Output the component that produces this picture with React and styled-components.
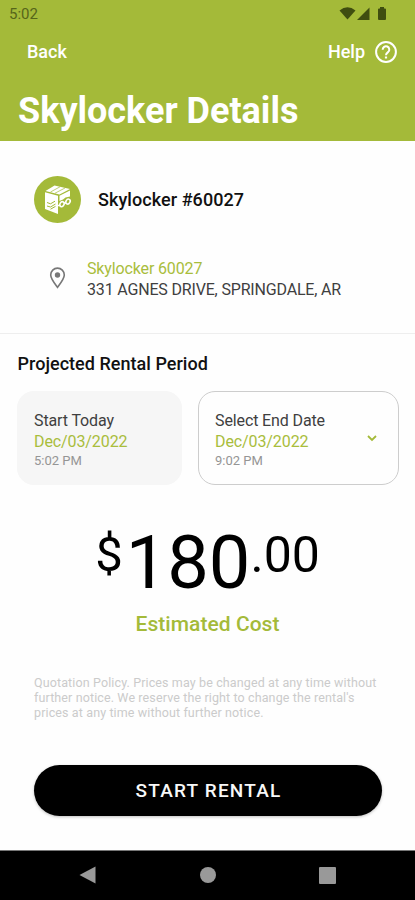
import React from "react";
import styled, { createGlobalStyle } from "styled-components";

const GlobalStyle = createGlobalStyle`
  :root {
    --color-primary: #a4ba39;
    --color-link: #a9bd3c;
    --color-text: #3f3f3f;
    --color-muted: #959595;
  }
  * {
    box-sizing: border-box;
  }
  body {
    margin: 0;
    background-color: #fefefe;
    font-family: Roboto, "Liberation Sans", sans-serif;
  }
  h1,
  h2,
  p {
    margin: 0;
  }
`;

const Screen = styled.div`
  width: 415px;
  height: 900px;
  overflow: hidden;
  display: flex;
  flex-direction: column;
  background-color: #fefefe;
`;

const Header = styled.header`
  flex: none;
  height: 141px;
  background-color: var(--color-primary);
  color: #fff;
`;

const StatusBar = styled.div`
  height: 28px;
  padding: 0 28px 0 9px;
  display: flex;
  align-items: center;
  justify-content: space-between;
  font-size: 15px;
  color: #56651a;
  & svg {
    display: block;
  }
`;

const NavRow = styled.div`
  height: 47px;
  padding: 0 18px 0 27px;
  display: flex;
  align-items: center;
  justify-content: space-between;
`;

const HeaderButton = styled.button`
  display: flex;
  align-items: center;
  gap: 10px;
  padding: 0;
  border: 0;
  background: none;
  color: inherit;
  font: 500 18px/24px Roboto, sans-serif;
`;

const Title = styled.h1`
  padding-left: 18px;
  font-size: 36px;
  line-height: 73px;
  font-weight: 700;
`;

const LockerSection = styled.section`
  flex: none;
  height: 193px;
  padding: 35px 34px 0;
  border-bottom: 1px solid #eee;
`;

const LockerRow = styled.div`
  display: flex;
  align-items: center;
  gap: 17px;
  height: 47px;
`;

const LockerName = styled.h2`
  font-size: 18px;
  line-height: 24px;
  font-weight: 500;
  letter-spacing: 0.07px;
  color: #111;
`;

const AddressRow = styled.div`
  display: flex;
  align-items: center;
  gap: 21px;
  margin-top: 35px;
  padding-left: 15px;
  & > svg {
    margin-top: -2px;
  }
`;

const Line = styled.p`
  font-size: ${({ $size }) => $size || 16}px;
  line-height: ${({ $height }) => $height || 21}px;
  letter-spacing: ${({ $spacing }) => $spacing || 0}px;
  color: ${({ $color }) => $color || "var(--color-text)"};
  white-space: nowrap;
`;

const PeriodTitle = styled.h2`
  padding: 18px 0 0 17.5px;
  font-size: 18px;
  line-height: 24px;
  font-weight: 500;
  letter-spacing: 0.03px;
  color: #111;
`;

const PeriodRow = styled.div`
  display: grid;
  grid-template-columns: 165px 201px;
  gap: 16px;
  margin: 15px 0 0 17px;
`;

const PeriodCard = styled.div`
  height: 94px;
  padding: 2px 21px 0 16px;
  display: flex;
  align-items: center;
  justify-content: space-between;
  border-radius: 17px;
  border: 1px solid ${({ $outlined }) => ($outlined ? "#cdcdcd" : "#f6f6f6")};
  background-color: ${({ $outlined }) => ($outlined ? "#fefefe" : "#f6f6f6")};
  & > svg {
    margin-top: -2px;
  }
`;

const Price = styled.div`
  display: flex;
  justify-content: center;
  margin-top: 35px;
  height: 85px;
  color: #000;
`;

const PricePart = styled.span`
  font-size: ${({ $size }) => $size}px;
  line-height: ${({ $height }) => $height}px;
  margin-right: ${({ $gap }) => $gap || 0}px;
`;

const CostLabel = styled.p`
  margin-top: 6px;
  text-align: center;
  font-size: 21px;
  line-height: 26px;
  font-weight: 500;
  letter-spacing: 0.05px;
  color: var(--color-primary);
`;

const Policy = styled.div`
  margin: 38px 0 0 34px;
`;

const StartButton = styled.button`
  flex: none;
  width: 348px;
  height: 51px;
  margin: 45px 0 0 34px;
  padding: 1px 0 0 1px;
  border: 0;
  border-radius: 26px;
  background-color: #000;
  color: #f8f8f8;
  font: 500 19px/50px Roboto, sans-serif;
  letter-spacing: 1.2px;
  box-shadow: 0 1px 3px rgba(0, 0, 0, 0.25);
`;

const SystemNav = styled.nav`
  flex: none;
  height: 50px;
  margin-top: auto;
  padding: 0 79px 1px 79px;
  display: flex;
  align-items: center;
  justify-content: space-between;
  border-top: 1px solid #777;
  background-color: #000;
`;

const StatusIcons = () => (
  <svg width="49" height="14" viewBox="0 0 49 14" fill="#3f4d10">
    <path d="M1.500 3.500Q9.500-2.800 17.500 3.500L9.500 12.500Z" />
    <path d="M31.500 .5V13H19Z" />
    <path d="M42 0h4v1.500h1q1 0 1 1V12q0 1-1 1h-6q-1 0-1-1V2.500q0-1 1-1H42Z" />
  </svg>
);

const HelpIcon = () => (
  <svg width="22" height="22" viewBox="0 0 22 22" fill="none" stroke="#fff">
    <circle cx="11" cy="11" r="9.900" strokeWidth="2" />
    <path
      d="M7.700 8.800a3.300 3.300 0 1 1 5.400 2.300C12 12 11 12.600 11 14.200"
      strokeWidth="2"
    />
    <path d="M11 15.500v2" strokeWidth="2.200" />
  </svg>
);

const LockerLogo = () => (
  <svg width="47" height="47" viewBox="0 0 47 47">
    <circle cx="23.500" cy="23.500" r="23.500" fill="#a4ba39" />
    <path d="M11.500 15 20.500 9.500 36 13 25.500 18.500Z" fill="#fff" />
    <path d="M11 16.200 24 19.700V38L11 33Z" fill="#fff" />
    <path d="M25.500 19.800 36 14.500V20.500L31.500 21.500 29 23.500 25.500 25Z" fill="#fff" />
    <g fill="none" stroke="#a4ba39" strokeWidth=".7">
      <path d="M16.500 16 26 10.800M21 17.200 31 12" />
    </g>
    <g fill="none" stroke="#a4ba39" strokeWidth="1">
      <path d="M13 26.500l3.500 1.300 4.500-2.600M13 30l3.500 1 5-3M16.500 33.200l5-2.800" />
    </g>
    <g fill="none" stroke="#fff" strokeWidth="1.600">
      <ellipse cx="28" cy="28.200" rx="2" ry="2.600" transform="rotate(30 28 28.200)" />
      <ellipse cx="34" cy="25.600" rx="2" ry="2.600" transform="rotate(30 34 25.600)" />
      <path d="M24 29.500h2M30 27.500l2-1" />
    </g>
  </svg>
);

const PinIcon = () => (
  <svg width="17" height="22" viewBox="0 0 17 22">
    <path
      d="M8.500 20.300C4.500 15 1.700 11.500 1.700 7.900a6.800 6.800 0 0 1 13.600 0C15.300 11.500 12.500 15 8.500 20.300Z"
      fill="none"
      stroke="#777"
      strokeWidth="1.600"
    />
    <circle cx="8.500" cy="8" r="2.700" fill="#777" />
  </svg>
);

const ChevronIcon = () => (
  <svg width="10" height="8" viewBox="0 0 10 8">
    <path d="M1 2l4 4 4-4" fill="none" stroke="#a4ba39" strokeWidth="1.800" />
  </svg>
);

const periods = [
  { label: "Start Today", date: "Dec/03/2022", time: "5:02 PM" },
  {
    label: "Select End Date",
    date: "Dec/03/2022",
    time: "9:02 PM",
    selectable: true,
  },
];

const policy = [
  "Quotation Policy. Prices may be changed at any time without",
  "further notice. We reserve the right to change the rental's",
  "prices at any time without further notice.",
];

const App = () => (
  <Screen>
    <GlobalStyle />
    <Header>
      <StatusBar>
        <span>5:02</span>
        <StatusIcons />
      </StatusBar>
      <NavRow>
        <HeaderButton>Back</HeaderButton>
        <HeaderButton>
          Help
          <HelpIcon />
        </HeaderButton>
      </NavRow>
      <Title>Skylocker Details</Title>
    </Header>
    <LockerSection>
      <LockerRow>
        <LockerLogo />
        <LockerName>Skylocker #60027</LockerName>
      </LockerRow>
      <AddressRow>
        <PinIcon />
        <div>
          <Line $color="var(--color-link)" $spacing={-0.14}>
            Skylocker 60027
          </Line>
          <Line $spacing={-0.17}>331 AGNES DRIVE, SPRINGDALE, AR</Line>
        </div>
      </AddressRow>
    </LockerSection>
    <PeriodTitle>Projected Rental Period</PeriodTitle>
    <PeriodRow>
      {periods.map(({ label, date, time, selectable }) => (
        <PeriodCard key={label} $outlined={selectable}>
          <div>
            <Line $spacing={-0.12}>{label}</Line>
            <Line $color="var(--color-link)" $spacing={-0.1}>
              {date}
            </Line>
            <Line $size={13} $height={17} $color="var(--color-muted)">
              {time}
            </Line>
          </div>
          {selectable && <ChevronIcon />}
        </PeriodCard>
      ))}
    </PeriodRow>
    <Price>
      <PricePart $size={49} $height={70} $gap={3}>
        $
      </PricePart>
      <PricePart $size={74} $height={85}>
        180
      </PricePart>
      <PricePart $size={50} $height={71}>
        .00
      </PricePart>
    </Price>
    <CostLabel>Estimated Cost</CostLabel>
    <Policy>
      {policy.map((text) => (
        <Line
          key={text}
          $size={12.5}
          $height={15}
          $spacing={0.12}
          $color="#cbcbcb"
        >
          {text}
        </Line>
      ))}
    </Policy>
    <StartButton>START RENTAL</StartButton>
    <SystemNav>
      <svg width="17" height="18" viewBox="0 0 17 18">
        <path d="M.5 9 16.500.5v17Z" fill="#999" />
      </svg>
      <svg width="16" height="16" viewBox="0 0 16 16">
        <circle cx="8" cy="8" r="8" fill="#999" />
      </svg>
      <svg width="17" height="17" viewBox="0 0 17 17">
        <rect width="17" height="17" rx="1" fill="#999" />
      </svg>
    </SystemNav>
  </Screen>
);

export default App;
